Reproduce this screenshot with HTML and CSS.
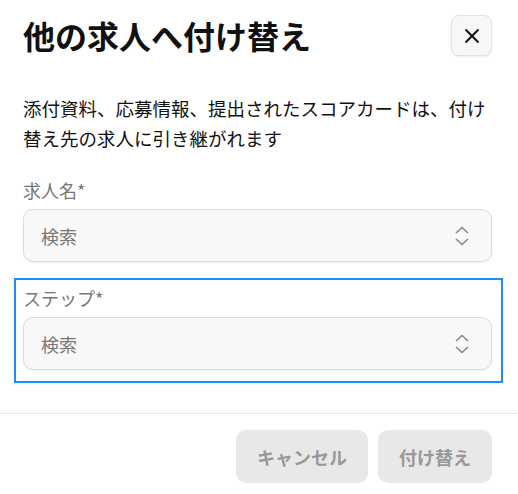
FILE: index.html
```html
<!DOCTYPE html>
<html lang="ja">
<head>
    <meta charset="UTF-8">
    <title>他の求人へ付け替え</title>
    <link rel="stylesheet" href="styles.css">
</head>
<body>

<div class="dialog">
    <div class="header">
        <h2>他の求人へ付け替え</h2>
        <button class="close-btn" aria-label="閉じる">
            <svg width="16" height="16" viewBox="0 0 16 16"><path d="M1.5 1.5 L14.5 14.5 M14.5 1.5 L1.5 14.5" stroke="#111" stroke-width="2" fill="none"/></svg>
        </button>
    </div>
    <div class="content">
        <p class="desc">添付資料、応募情報、提出されたスコアカードは、付け替え先の求人に引き継がれます</p>
        <div class="form-group">
            <label>求人名*</label>
            <div class="select">
                <span>検索</span>
                <svg width="16" height="20" viewBox="0 0 16 20"><path d="M2 7 L8 1.5 L14 7 M2 13 L8 18.5 L14 13" stroke="#888" stroke-width="1.6" fill="none"/></svg>
            </div>
        </div>
        <div class="form-group active">
            <label>ステップ*</label>
            <div class="select">
                <span>検索</span>
                <svg width="16" height="20" viewBox="0 0 16 20"><path d="M2 7 L8 1.5 L14 7 M2 13 L8 18.5 L14 13" stroke="#888" stroke-width="1.6" fill="none"/></svg>
            </div>
        </div>
    </div>
    <div class="footer">
        <button class="btn" disabled>キャンセル</button>
        <button class="btn" disabled>付け替え</button>
    </div>
</div>

</body>
</html>
```
FILE: styles.css
```css
body {
    font-family: "Noto Sans CJK JP", "Noto Sans", sans-serif;
    background-color: #fff;
    color: #111;
    margin: 0;
    padding: 0;
}
.dialog {
    width: 518px;
}
.header {
    display: flex;
    justify-content: space-between;
    align-items: center;
    padding: 15px 26px 0 23px;
}
.header h2 {
    margin: 0;
    font-size: 32px;
    font-weight: 700;
    line-height: 41px;
}
.close-btn {
    width: 41px;
    height: 41px;
    display: flex;
    align-items: center;
    justify-content: center;
    padding: 0;
    background-color: #f7f7f7;
    border: 1px solid #e2e2e2;
    border-radius: 8px;
    box-shadow: 0 1px 2px rgba(0, 0, 0, 0.08);
}
.content {
    padding: 0 26px 0 23px;
}
.desc {
    margin: 37px 0 0;
    font-size: 18.5px;
    line-height: 30px;
    color: #111;
}
.form-group {
    margin-top: 25px;
}
.form-group label {
    display: block;
    font-size: 18px;
    line-height: 24px;
    color: #777;
    margin-bottom: 7px;
}
.form-group.active {
    margin: 16px -11px 0 -9px;
    padding: 6px 9px 11px 7px;
    border: 2px solid #1a8cff;
}
.select {
    height: 53px;
    box-sizing: border-box;
    display: flex;
    align-items: center;
    justify-content: space-between;
    padding: 0 21px 0 17px;
    background-color: #f8f8f8;
    border: 1px solid #dcdcdc;
    border-radius: 10px;
    box-shadow: 0 1px 2px rgba(0, 0, 0, 0.06);
    font-size: 18px;
    color: #777;
}
.select svg {
    display: block;
}
.footer {
    display: flex;
    justify-content: flex-end;
    gap: 10px;
    margin-top: 30px;
    padding: 16px 26px 0 23px;
    border-top: 1px solid #e6e6e6;
}
.btn {
    height: 53px;
    padding: 0 21px;
    border: none;
    border-radius: 10px;
    background-color: #e8e8e8;
    color: #999;
    font-family: inherit;
    font-size: 18px;
    font-weight: 700;
}
```
